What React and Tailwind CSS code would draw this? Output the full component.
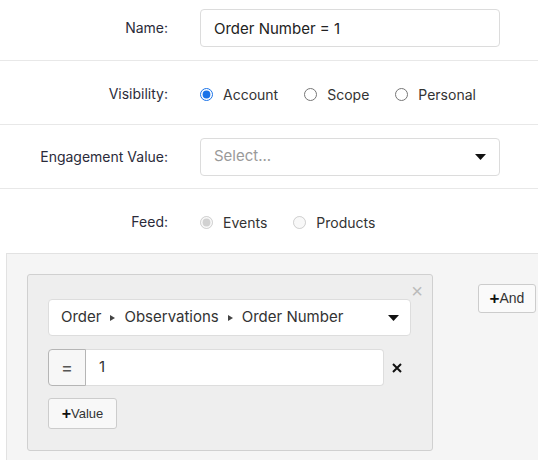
export default function App() {
  return (
    <div className="w-[538px] h-[460px] overflow-hidden bg-white text-[#2b2b3a]" style={{ fontFamily: "Inter, 'Noto Sans', sans-serif" }}>
      {/* Name */}
      <div className="flex items-start h-[61px] border-b border-[#e8e8e8] pt-[9px]">
        <div className="w-[168px] text-right text-[14px] leading-[38px]">Name:</div>
        <input
          className="ml-[32px] w-[300px] h-[38px] rounded-[4px] border border-[#dcdcdc] px-[13px] text-[15px] text-[#222] outline-none"
          defaultValue="Order Number = 1"
        />
      </div>

      {/* Visibility */}
      <div className="flex items-center h-[64px] border-b border-[#e8e8e8] pt-[4px]">
        <div className="w-[168px] text-right text-[14px] -mt-[3px]">Visibility:</div>
        <div className="ml-[32px] flex items-center text-[14px] text-[#333]">
          <label className="flex items-center gap-[10px] mr-[26px]">
            <input type="radio" name="vis" defaultChecked className="w-[13px] h-[13px] m-0 accent-[#1a73e8]" />
            Account
          </label>
          <label className="flex items-center gap-[10px] mr-[26px]">
            <input type="radio" name="vis" className="w-[13px] h-[13px] m-0" />
            Scope
          </label>
          <label className="flex items-center gap-[10px]">
            <input type="radio" name="vis" className="w-[13px] h-[13px] m-0" />
            Personal
          </label>
        </div>
      </div>

      {/* Engagement value */}
      <div className="flex items-center h-[64px] border-b border-[#e8e8e8]">
        <div className="w-[168px] text-right text-[14px]">Engagement Value:</div>
        <div className="ml-[32px] w-[300px] h-[38px] rounded-[4px] border border-[#dcdcdc] px-[13px] flex items-center justify-between">
          <span className="text-[15px] text-[#9a9a9a]">Select...</span>
          <svg width="11" height="6" viewBox="0 0 11 6"><path d="M0 0h11L5.5 6z" fill="#111" /></svg>
        </div>
      </div>

      {/* Feed */}
      <div className="flex items-center h-[64px] pt-[2px]">
        <div className="w-[168px] text-right text-[14px] -mt-[2px]">Feed:</div>
        <div className="ml-[32px] flex items-center text-[14px] text-[#333]">
          <label className="flex items-center gap-[10px] mr-[26px]">
            <input type="radio" name="feed" defaultChecked disabled className="w-[13px] h-[13px] m-0" />
            Events
          </label>
          <label className="flex items-center gap-[10px]">
            <input type="radio" name="feed" disabled className="w-[13px] h-[13px] m-0" />
            Products
          </label>
        </div>
      </div>

      {/* Condition panel */}
      <div className="ml-[6px] h-[220px] bg-[#f5f5f5] border-t border-l border-[#e2e2e2] pt-[20px] pl-[20px] flex items-start">
        <div className="relative w-[406px] h-[177px] bg-[#eeeeee] border border-[#d0d0d0] rounded-[3px] pl-[20px] pt-[24px]">
          <span className="absolute right-[9px] top-[6px] text-[#bbbbbb] text-[20px] leading-none" style={{ fontFamily: "'Liberation Sans', Arial, sans-serif" }}>×</span>
          <div className="w-[363px] h-[37px] bg-white border border-[#dddddd] rounded-[4px] pl-[12px] pr-[11px] flex items-center justify-between text-[15px] text-[#333]">
            <span className="flex items-center">
              Order
              <svg className="mx-[9px]" width="5" height="6" viewBox="0 0 5 6"><path d="M0 0l5 3-5 3z" fill="#444" /></svg>
              Observations
              <svg className="mx-[9px]" width="5" height="6" viewBox="0 0 5 6"><path d="M0 0l5 3-5 3z" fill="#444" /></svg>
              Order Number
            </span>
            <svg width="11" height="6" viewBox="0 0 11 6"><path d="M0 0h11L5.5 6z" fill="#111" /></svg>
          </div>
          <div className="mt-[13px] flex items-center">
            <div className="w-[38px] h-[37px] bg-[#f7f7f7] border border-[#b5b5b5] rounded-l-[4px] flex items-center justify-center text-[18px] text-[#555]">=</div>
            <div className="w-[298px] h-[37px] bg-white border border-l-0 border-[#dddddd] rounded-r-[4px] pl-[13px] flex items-center text-[15px] text-[#333]">1</div>
            <svg className="ml-[8px]" width="10" height="10" viewBox="0 0 10 10"><path d="M1 1l8 8M9 1l-8 8" stroke="#111" strokeWidth="2" /></svg>
          </div>
          <button className="mt-[12px] h-[31px] w-[69px] bg-[#f8f8f8] border border-[#cccccc] rounded-[3px] text-[13px] text-[#333] flex items-center justify-center" style={{ fontFamily: "'Liberation Sans', Arial, sans-serif" }}>
            <span className="text-[16px] font-bold leading-none text-[#111]">+</span>Value
          </button>
        </div>
        <button className="ml-[45px] mt-[10px] h-[29px] w-[58px] bg-[#fafafa] border border-[#cccccc] rounded-[3px] text-[14px] text-[#333] flex items-center justify-center" style={{ fontFamily: "'Liberation Sans', Arial, sans-serif" }}>
          <span className="text-[17px] font-bold leading-none text-[#111]">+</span>And
        </button>
      </div>
    </div>
  );
}
